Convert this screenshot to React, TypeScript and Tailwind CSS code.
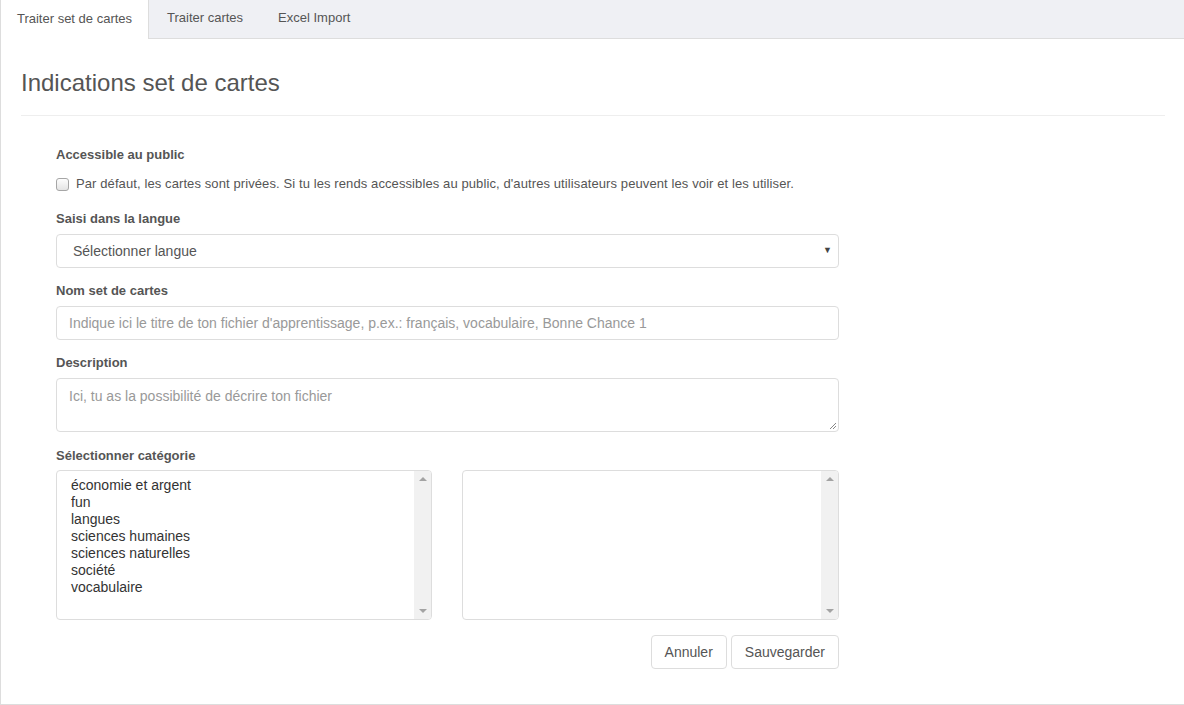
import React from 'react';

const categories = [
  'économie et argent',
  'fun',
  'langues',
  'sciences humaines',
  'sciences naturelles',
  'société',
  'vocabulaire',
];

const FakeScrollbar: React.FC = () => (
  <div className="w-[17px] bg-[#f1f1f1] flex flex-col items-center justify-between py-[6px]">
    <div className="w-0 h-0 border-l-[4px] border-r-[4px] border-b-[4px] border-l-transparent border-r-transparent border-b-[#a3a3a3]" />
    <div className="w-0 h-0 border-l-[4px] border-r-[4px] border-t-[4px] border-l-transparent border-r-transparent border-t-[#a3a3a3]" />
  </div>
);

const App: React.FC = () => {
  return (
    <div className="w-[1184px] h-[705px] overflow-hidden bg-white text-[#555] font-['Liberation_Sans',Arial,sans-serif]">
      {/* onglets */}
      <div className="flex h-[39px] bg-[#eff0f4] border-b border-[#ddd] text-[13px]">
        <div className="h-[39px] w-[149px] bg-white border-x border-[#ddd] flex items-center justify-center pb-[2px] text-[#555]">
          Traiter set de cartes
        </div>
        <div className="h-[38px] px-[18px] flex items-center pb-[2px] text-[#555]">Traiter cartes</div>
        <div className="h-[38px] px-[17px] flex items-center pb-[2px] text-[#555]">Excel Import</div>
      </div>

      <div className="border-l border-b border-[#ddd] h-[666px] pl-[20px] pr-[19px]">
        <h2 className="text-[24px] leading-[26px] text-[#555] pt-[31px]">Indications set de cartes</h2>
        <div className="mt-[19px] border-t border-[#eee]" />

        <form className="ml-[35px] w-[783px] pt-[30px]">
          <label className="block text-[13px] font-bold leading-[18px]">Accessible au public</label>
          <div className="flex items-center mt-[11px] text-[13px] leading-[18px]">
            <span className="w-[13px] h-[13px] border border-[#a6a6a6] rounded-[3px] bg-gradient-to-b from-[#fdfdfd] to-[#e4e4e4]" />
            <span className="ml-[7px] tracking-[0.1px]">
              Par défaut, les cartes sont privées. Si tu les rends accessibles au public, d'autres utilisateurs peuvent les voir et les utiliser.
            </span>
          </div>

          <label className="block text-[13px] font-bold leading-[18px] mt-[17px]">Saisi dans la langue</label>
          <div className="mt-[6px] h-[34px] border border-[#ddd] rounded-[4px] flex items-center justify-between pl-[16px] pr-[6px] text-[14px] text-[#555]">
            <span>Sélectionner langue</span>
            <span className="text-[9px] text-[#444]">▼</span>
          </div>

          <label className="block text-[13px] font-bold leading-[18px] mt-[14px]">Nom set de cartes</label>
          <div className="mt-[6px] h-[34px] border border-[#ddd] rounded-[4px] flex items-center pl-[12px] text-[14px] text-[#999]">
            Indique ici le titre de ton fichier d'apprentissage, p.ex.: français, vocabulaire, Bonne Chance 1
          </div>

          <label className="block text-[13px] font-bold leading-[18px] mt-[14px]">Description</label>
          <div className="relative mt-[6px] h-[54px] border border-[#ddd] rounded-[4px] pl-[12px] pt-[7px] text-[14px] text-[#999]">
            Ici, tu as la possibilité de décrire ton fichier
            <svg className="absolute right-[1px] bottom-[1px]" width="9" height="9" viewBox="0 0 9 9">
              <path d="M8 2 L2 8 M8 5 L5 8" stroke="#888" strokeWidth="1" />
            </svg>
          </div>

          <label className="block text-[13px] font-bold leading-[18px] mt-[15px]">Sélectionner catégorie</label>
          <div className="mt-[5px] flex justify-between">
            <div className="w-[376px] h-[150px] border border-[#ddd] rounded-[4px] flex overflow-hidden">
              <div className="flex-1 pl-[14px] pt-[6px] text-[14px] leading-[17px] text-[#333]">
                {categories.map(c => (
                  <div key={c}>{c}</div>
                ))}
              </div>
              <FakeScrollbar />
            </div>
            <div className="w-[377px] h-[150px] border border-[#ddd] rounded-[4px] flex overflow-hidden">
              <div className="flex-1" />
              <FakeScrollbar />
            </div>
          </div>

          <div className="flex justify-end gap-[4px] mt-[15px]">
            <button type="button" className="h-[34px] px-[13px] border border-[#ddd] rounded-[4px] text-[14px] text-[#555] bg-white">
              Annuler
            </button>
            <button type="button" className="h-[34px] px-[13px] border border-[#ddd] rounded-[4px] text-[14px] text-[#555] bg-white">
              Sauvegarder
            </button>
          </div>
        </form>
      </div>
    </div>
  );
};

export default App;
